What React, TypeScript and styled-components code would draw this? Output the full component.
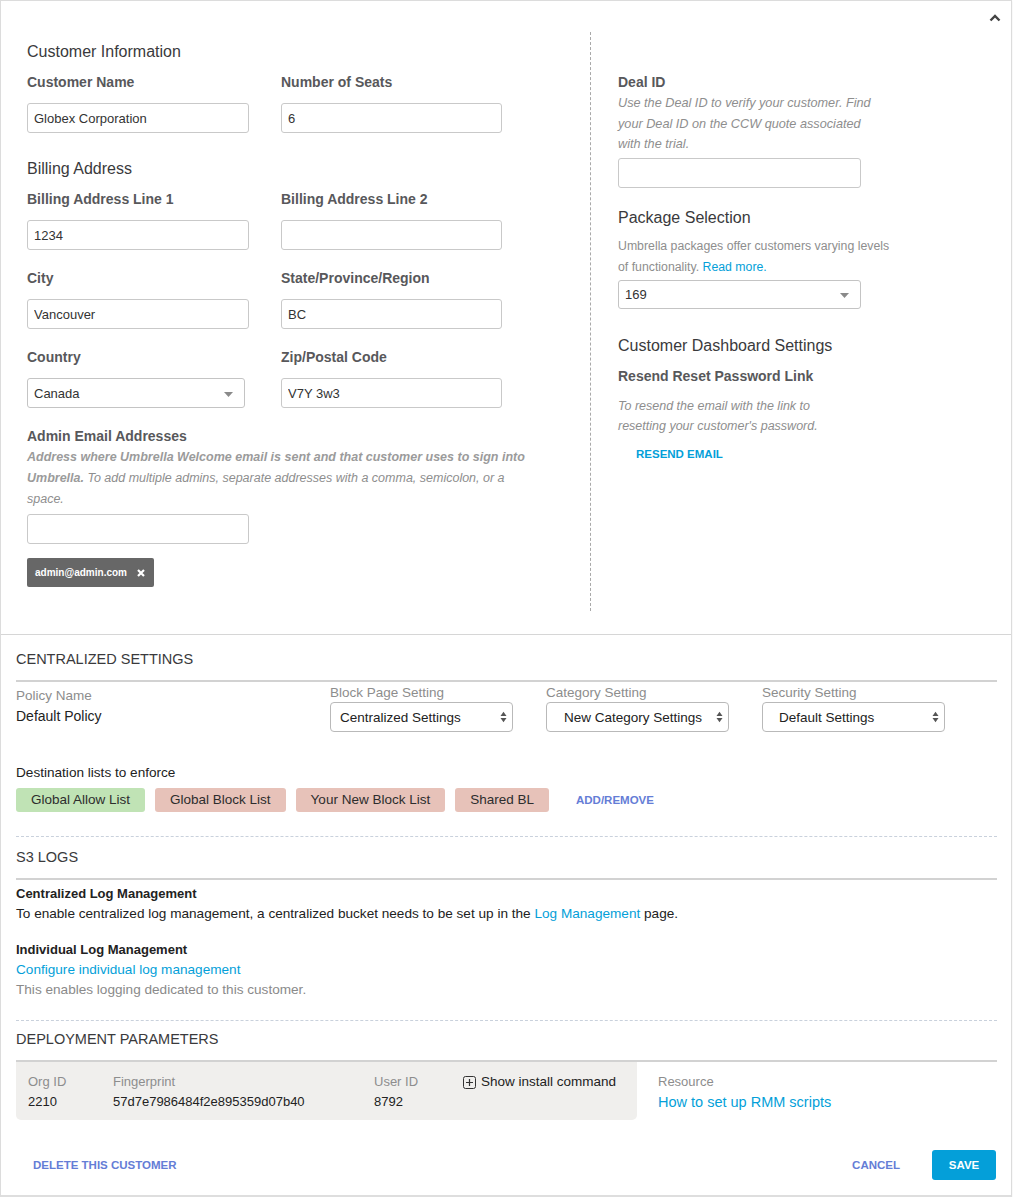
import React from "react";
import styled, { createGlobalStyle } from "styled-components";

const Global = createGlobalStyle`
  html, body { margin: 0; padding: 0; background: #ffffff; }
  body { font-family: "Liberation Sans", Arial, Helvetica, sans-serif; color: #333; }
  * { box-sizing: border-box; }
`;

const Card = styled.div`
  width: 1012px;
  border: 1px solid #dcdcdc;
  border-bottom: 2px solid #dedede;
  background: #fff;
  box-shadow: 0 1px 2px rgba(0, 0, 0, 0.08);
`;

/* ---------- top customer form ---------- */
const TopSection = styled.section`
  position: relative;
  display: grid;
  grid-template-columns: 563px 1px 1fr;
  padding: 30px 0 23px 26px;
  border-bottom: 1px solid #d6d6d6;
`;

const CollapseButton = styled.button`
  position: absolute;
  top: 11px;
  right: 9px;
  width: 14px;
  height: 12px;
  padding: 0;
  border: 0;
  background: none;
  display: flex;
  align-items: center;
  justify-content: center;
`;

const Column = styled.div<{ $pt: number; $pl?: number }>`
  display: flex;
  flex-direction: column;
  align-items: flex-start;
  padding-top: ${(p) => p.$pt}px;
  padding-left: ${(p) => p.$pl ?? 0}px;
  padding-bottom: 24px;
`;

const Divider = styled.div`
  border-left: 1px dashed #a9a9a9;
  width: 1px;
  margin-top: 1px;
`;

const SubHeading = styled.h3<{ $mt?: number }>`
  margin: ${(p) => p.$mt ?? 0}px 0 0;
  font-size: 16px;
  line-height: 20px;
  font-weight: normal;
  color: #3a3a3c;
`;

const FieldGrid = styled.div`
  display: grid;
  grid-template-columns: 222px 221px;
  column-gap: 32px;
  row-gap: 19px;
  margin-top: 11px;
`;

const Field = styled.div`
  display: flex;
  flex-direction: column;
`;

const Label = styled.label<{ $mt?: number }>`
  display: block;
  margin-top: ${(p) => p.$mt ?? 0}px;
  font-size: 14px;
  line-height: 18px;
  font-weight: bold;
  color: #58585b;
`;

const TextInput = styled.input<{ $w?: number; $mt?: number }>`
  width: ${(p) => p.$w ?? 222}px;
  height: 30px;
  margin-top: ${(p) => p.$mt ?? 12}px;
  padding: 0 6px;
  border: 1px solid #c9c9c9;
  border-radius: 3px;
  font-family: inherit;
  font-size: 13px;
  color: #333;
  background: #fff;
  outline: none;
`;

const SelectWrap = styled.div<{ $w: number; $h?: number; $mt?: number }>`
  position: relative;
  width: ${(p) => p.$w}px;
  height: ${(p) => p.$h ?? 30}px;
  margin-top: ${(p) => p.$mt ?? 12}px;
`;

const FormSelect = styled.select`
  appearance: none;
  -webkit-appearance: none;
  width: 100%;
  height: 100%;
  padding: 0 6px;
  border: 1px solid #c4c4c4;
  border-radius: 3px;
  background: #fff;
  font-family: inherit;
  font-size: 13px;
  color: #333;
  outline: none;
`;

const Caret = styled.svg`
  position: absolute;
  right: 12px;
  top: 50%;
  margin-top: -1px;
  pointer-events: none;
`;

const Help = styled.p<{ $mt?: number; $italic?: boolean; $lh?: number; $size?: number }>`
  margin: ${(p) => p.$mt ?? 0}px 0 0;
  font-size: ${(p) => p.$size ?? 12.5}px;
  line-height: ${(p) => p.$lh ?? 20.5}px;
  font-style: ${(p) => (p.$italic ? "italic" : "normal")};
  color: #8e8e8e;
  white-space: nowrap;
`;

const HelpStrong = styled.strong`
  color: #9b9b9b;
`;

const InlineLink = styled.a`
  color: #049fd9;
  text-decoration: none;
`;

const Tag = styled.span`
  display: inline-flex;
  align-items: center;
  gap: 10px;
  height: 29px;
  margin-top: 14px;
  padding: 0 9px 0 8px;
  background: #676767;
  border-radius: 2px;
  color: #fff;
  font-size: 10px;
  font-weight: bold;
`;

const ActionLink = styled.a<{ $color?: string; $ml?: number; $mt?: number }>`
  display: inline-block;
  margin-left: ${(p) => p.$ml ?? 0}px;
  margin-top: ${(p) => p.$mt ?? 0}px;
  font-size: 11.5px;
  line-height: 16px;
  font-weight: bold;
  color: ${(p) => p.$color ?? "#647dd6"};
  text-decoration: none;
  text-transform: uppercase;
`;

/* ---------- lower settings ---------- */
const Lower = styled.div`
  padding: 0 14px 0 15px;
`;

const Block = styled.section<{ $pt: number; $dashed?: boolean }>`
  padding-top: ${(p) => p.$pt}px;
  border-bottom: ${(p) => (p.$dashed ? "1px dashed #c9d1dc" : "none")};
`;

const SectionTitle = styled.h2`
  margin: 0;
  padding-bottom: 11px;
  border-bottom: 2px solid #d2d2d2;
  font-size: 14.5px;
  line-height: 20px;
  font-weight: normal;
  color: #3a3a3c;
  text-transform: uppercase;
`;

const SettingsRow = styled.div`
  display: grid;
  grid-template-columns: 314px 216px 216px 216px;
  margin-top: 3px;
`;

const SettingCol = styled.div<{ $pt?: number }>`
  display: flex;
  flex-direction: column;
  align-items: flex-start;
  padding-top: ${(p) => p.$pt ?? 0}px;
`;

const MutedLabel = styled.span<{ $size?: number; $lh?: number }>`
  font-size: ${(p) => p.$size ?? 13.5}px;
  line-height: ${(p) => p.$lh ?? 16}px;
  color: #8d8d8d;
`;

const PolicyName = styled.span`
  margin-top: 4px;
  font-size: 14px;
  line-height: 16px;
  color: #222;
`;

const PolicySelect = styled.select<{ $pad: number }>`
  appearance: none;
  -webkit-appearance: none;
  width: 100%;
  height: 100%;
  padding: 0 0 0 ${(p) => p.$pad}px;
  border: 1px solid #b9b9b9;
  border-radius: 4px;
  background: #fff;
  font-family: inherit;
  font-size: 13.5px;
  color: #222;
  outline: none;
`;

const Stepper = styled.svg`
  position: absolute;
  right: 6px;
  top: 50%;
  margin-top: -6px;
  pointer-events: none;
`;

const PlainText = styled.p<{ $mt?: number; $bold?: boolean; $muted?: boolean }>`
  margin: ${(p) => p.$mt ?? 0}px 0 0;
  font-size: 13.6px;
  line-height: 20px;
  font-weight: ${(p) => (p.$bold ? "bold" : "normal")};
  color: ${(p) => (p.$muted ? "#8a8a8a" : "#222")};
`;

const BoldText = styled(PlainText)`
  font-size: 13px;
`;

const PillRow = styled.div`
  display: flex;
  align-items: center;
  gap: 10px;
  margin-top: 5px;
  padding-bottom: 24px;
`;

const Pill = styled.span<{ $allow?: boolean }>`
  height: 24px;
  padding: 0 15px;
  line-height: 24px;
  border-radius: 3px;
  font-size: 13.5px;
  color: #2d2d2d;
  background: ${(p) => (p.$allow ? "#c0e3b5" : "#e7c2b9")};
`;

const Spacer = styled.div<{ $h: number }>`
  height: ${(p) => p.$h}px;
`;

const DeployRow = styled.div`
  display: flex;
  align-items: flex-start;
`;

const DeployBox = styled.div`
  display: grid;
  grid-template-columns: 85px 261px 89px 1fr;
  width: 621px;
  height: 58px;
  padding: 10px 12px 0;
  background: #f0efed;
  border-radius: 0 0 5px 5px;
`;

const DeployCell = styled.div`
  display: flex;
  flex-direction: column;
`;

const DeployValue = styled.span`
  font-size: 13px;
  line-height: 20px;
  color: #222;
`;

const ShowInstall = styled.span`
  display: flex;
  align-items: center;
  gap: 5px;
  font-size: 13.5px;
  line-height: 20px;
  color: #222;
  white-space: nowrap;
`;

const Resource = styled.div`
  display: flex;
  flex-direction: column;
  margin-left: 21px;
  padding-top: 10px;
`;

const ResourceLink = styled.a`
  font-size: 14.5px;
  line-height: 20px;
  color: #049fd9;
  text-decoration: none;
`;

const Footer = styled.footer`
  display: flex;
  align-items: center;
  padding: 30px 1px 15px 17px;
`;

const FooterRight = styled.div`
  display: flex;
  align-items: center;
  gap: 32px;
  margin-left: auto;
`;

const SaveButton = styled.button`
  width: 64px;
  height: 30px;
  border: 0;
  border-radius: 3px;
  background: #049fd9;
  color: #fff;
  font-family: inherit;
  font-size: 11.5px;
  font-weight: bold;
`;

const CaretIcon = () => (
  <Caret width="9" height="5" viewBox="0 0 9 5">
    <path d="M0 0 L9 0 L4.5 5 Z" fill="#8a8a8a" />
  </Caret>
);

const StepperIcon = () => (
  <Stepper width="7" height="12" viewBox="0 0 7 12">
    <path d="M0.5 5 L3.5 0.8 L6.5 5 Z" fill="#555" />
    <path d="M0.5 7 L3.5 11.2 L6.5 7 Z" fill="#555" />
  </Stepper>
);

const Policy = ({ label, value, pad }: { label: string; value: string; pad: number }) => (
  <SettingCol>
    <MutedLabel>{label}</MutedLabel>
    <SelectWrap $w={183} $mt={1}>
      <PolicySelect $pad={pad} defaultValue={value}>
        <option>{value}</option>
      </PolicySelect>
      <StepperIcon />
    </SelectWrap>
  </SettingCol>
);

export default function App() {
  return (
    <>
      <Global />
      <Card>
        <TopSection>
          <CollapseButton aria-label="Collapse">
            <svg width="12" height="8" viewBox="0 0 12 8">
              <polyline points="1.5,6.5 6,2 10.5,6.5" fill="none" stroke="#444" strokeWidth="2.4" />
            </svg>
          </CollapseButton>

          <Column $pt={11}>
            <SubHeading>Customer Information</SubHeading>
            <FieldGrid>
              <Field>
                <Label>Customer Name</Label>
                <TextInput defaultValue="Globex Corporation" />
              </Field>
              <Field>
                <Label>Number of Seats</Label>
                <TextInput $w={221} defaultValue="6" />
              </Field>
            </FieldGrid>

            <SubHeading $mt={26}>Billing Address</SubHeading>
            <FieldGrid>
              <Field>
                <Label>Billing Address Line 1</Label>
                <TextInput defaultValue="1234" />
              </Field>
              <Field>
                <Label>Billing Address Line 2</Label>
                <TextInput $w={221} defaultValue="" />
              </Field>
              <Field>
                <Label>City</Label>
                <TextInput defaultValue="Vancouver" />
              </Field>
              <Field>
                <Label>State/Province/Region</Label>
                <TextInput $w={221} defaultValue="BC" />
              </Field>
              <Field>
                <Label>Country</Label>
                <SelectWrap $w={218}>
                  <FormSelect defaultValue="Canada">
                    <option>Canada</option>
                  </FormSelect>
                  <CaretIcon />
                </SelectWrap>
              </Field>
              <Field>
                <Label>Zip/Postal Code</Label>
                <TextInput $w={221} defaultValue="V7Y 3w3" />
              </Field>
            </FieldGrid>

            <Label $mt={19}>Admin Email Addresses</Label>
            <Help $italic $lh={21} $mt={2}>
              <HelpStrong>Address where Umbrella Welcome email is sent and that customer uses to sign into</HelpStrong>
              <br />
              <HelpStrong>Umbrella.</HelpStrong> To add multiple admins, separate addresses with a comma, semicolon, or a
              <br />
              space.
            </Help>
            <TextInput $mt={4} defaultValue="" />
            <Tag>
              admin@admin.com
              <svg width="8" height="8" viewBox="0 0 8 8">
                <path d="M1 1 L7 7 M7 1 L1 7" stroke="#fff" strokeWidth="2.2" />
              </svg>
            </Tag>
          </Column>

          <Divider />

          <Column $pt={42} $pl={27}>
            <Label>Deal ID</Label>
            <Help $italic $mt={2} $size={12.7}>
              Use the Deal ID to verify your customer. Find
              <br />
              your Deal ID on the CCW quote associated
              <br />
              with the trial.
            </Help>
            <TextInput $w={243} $mt={3} defaultValue="" />

            <SubHeading $mt={20}>Package Selection</SubHeading>
            <Help $lh={21} $mt={8} $size={12.3}>
              Umbrella packages offer customers varying levels
              <br />
              of functionality. <InlineLink href="#">Read more.</InlineLink>
            </Help>
            <SelectWrap $w={243} $h={29} $mt={2}>
              <FormSelect defaultValue="169">
                <option>169</option>
              </FormSelect>
              <CaretIcon />
            </SelectWrap>

            <SubHeading $mt={27}>Customer Dashboard Settings</SubHeading>
            <Label $mt={11}>Resend Reset Password Link</Label>
            <Help $italic $mt={11}>
              To resend the email with the link to
              <br />
              resetting your customer's password.
            </Help>
            <ActionLink href="#" $color="#049fd9" $ml={18} $mt={9}>
              Resend Email
            </ActionLink>
          </Column>
        </TopSection>

        <Lower>
          <Block $pt={14} $dashed>
            <SectionTitle>Centralized Settings</SectionTitle>
            <SettingsRow>
              <SettingCol $pt={3}>
                <MutedLabel>Policy Name</MutedLabel>
                <PolicyName>Default Policy</PolicyName>
              </SettingCol>
              <Policy label="Block Page Setting" value="Centralized Settings" pad={9} />
              <Policy label="Category Setting" value="New Category Settings" pad={17} />
              <Policy label="Security Setting" value="Default Settings" pad={16} />
            </SettingsRow>
            <PlainText $mt={31}>Destination lists to enforce</PlainText>
            <PillRow>
              <Pill $allow>Global Allow List</Pill>
              <Pill>Global Block List</Pill>
              <Pill>Your New Block List</Pill>
              <Pill>Shared BL</Pill>
              <ActionLink href="#" $ml={17}>
                Add/Remove
              </ActionLink>
            </PillRow>
          </Block>

          <Block $pt={10} $dashed>
            <SectionTitle>S3 Logs</SectionTitle>
            <BoldText $mt={4} $bold>
              Centralized Log Management
            </BoldText>
            <PlainText>
              To enable centralized log management, a centralized bucket needs to be set up in the{" "}
              <InlineLink href="#">Log Management</InlineLink> page.
            </PlainText>
            <BoldText $mt={16} $bold>
              Individual Log Management
            </BoldText>
            <PlainText>
              <InlineLink href="#">Configure individual log management</InlineLink>
            </PlainText>
            <PlainText $muted>This enables logging dedicated to this customer.</PlainText>
            <Spacer $h={20} />
          </Block>

          <Block $pt={8}>
            <SectionTitle>Deployment Parameters</SectionTitle>
            <DeployRow>
              <DeployBox>
                <DeployCell>
                  <MutedLabel $size={13} $lh={20}>Org ID</MutedLabel>
                  <DeployValue>2210</DeployValue>
                </DeployCell>
                <DeployCell>
                  <MutedLabel $size={13} $lh={20}>Fingerprint</MutedLabel>
                  <DeployValue>57d7e7986484f2e895359d07b40</DeployValue>
                </DeployCell>
                <DeployCell>
                  <MutedLabel $size={13} $lh={20}>User ID</MutedLabel>
                  <DeployValue>8792</DeployValue>
                </DeployCell>
                <DeployCell>
                  <ShowInstall>
                    <svg width="13" height="13" viewBox="0 0 13 13">
                      <rect x="0.5" y="0.5" width="12" height="12" rx="2" fill="none" stroke="#333" />
                      <path d="M6.5 3 V10 M3 6.5 H10" stroke="#333" strokeWidth="1.2" />
                    </svg>
                    Show install command
                  </ShowInstall>
                </DeployCell>
              </DeployBox>
              <Resource>
                <MutedLabel $size={13} $lh={20}>Resource</MutedLabel>
                <ResourceLink href="#">How to set up RMM scripts</ResourceLink>
              </Resource>
            </DeployRow>
          </Block>

          <Footer>
            <ActionLink href="#">Delete this customer</ActionLink>
            <FooterRight>
              <ActionLink href="#">Cancel</ActionLink>
              <SaveButton>SAVE</SaveButton>
            </FooterRight>
          </Footer>
        </Lower>
      </Card>
    </>
  );
}
